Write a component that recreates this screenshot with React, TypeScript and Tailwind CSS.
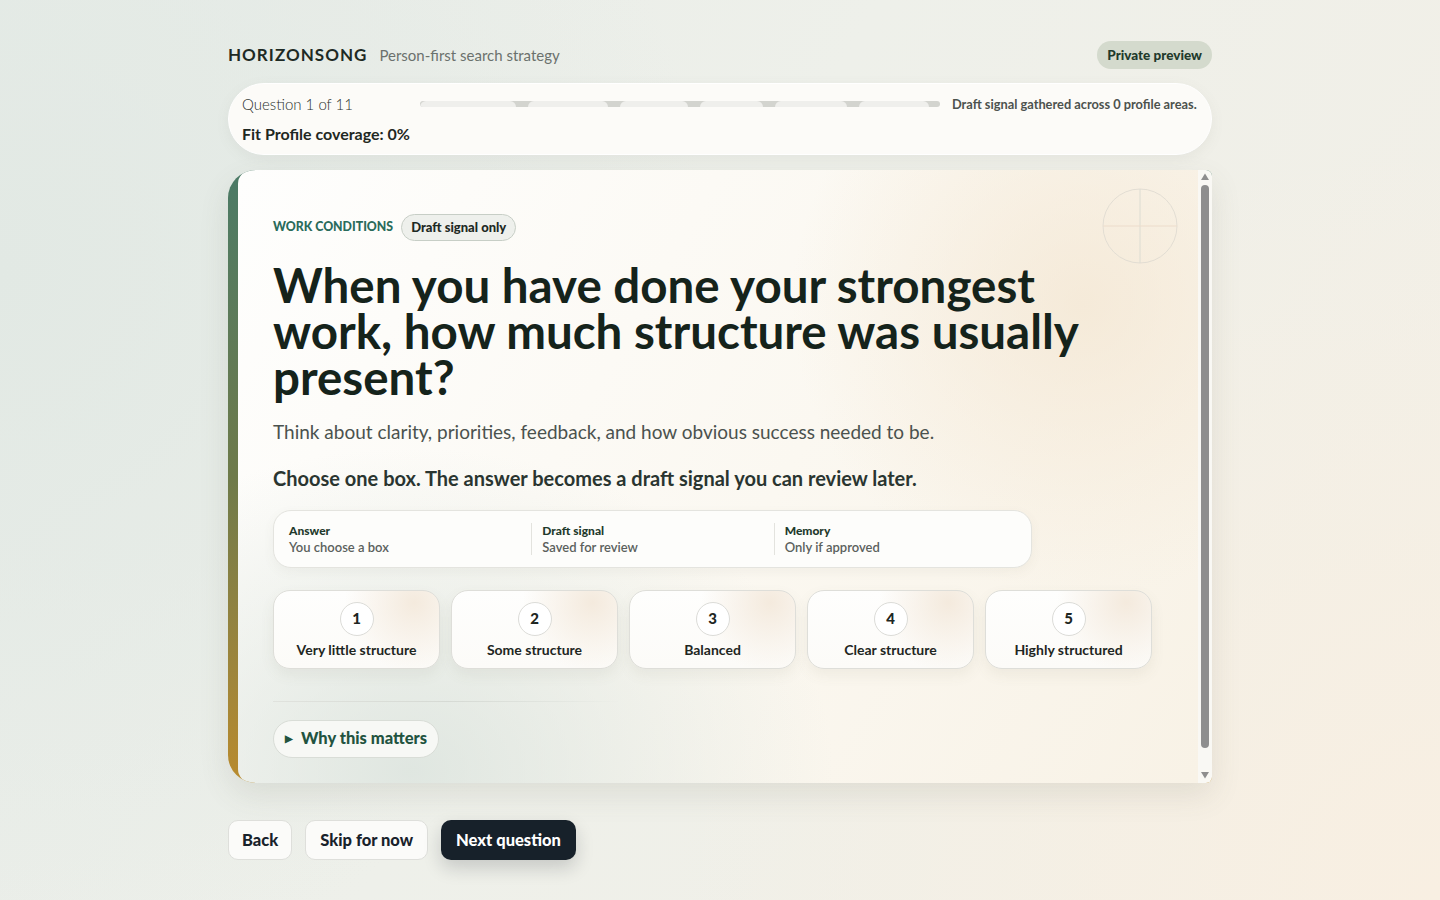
import React from 'react';

const segments = [96, 80, 68, 63, 72, 70];

const options = [
  { n: 1, label: 'Very little structure' },
  { n: 2, label: 'Some structure' },
  { n: 3, label: 'Balanced' },
  { n: 4, label: 'Clear structure' },
  { n: 5, label: 'Highly structured' },
];

const steps = [
  { title: 'Answer', text: 'You choose a box' },
  { title: 'Draft signal', text: 'Saved for review' },
  { title: 'Memory', text: 'Only if approved' },
];

const App: React.FC = () => {
  return (
    <div className="min-h-screen w-full font-['Lato',sans-serif] bg-[radial-gradient(circle_at_0%_30%,#e2e9e4,transparent_45%),radial-gradient(circle_at_100%_100%,#f8efe2,transparent_45%),linear-gradient(120deg,#e7ece8,#eef0ea_45%,#f3efe6)] pt-[41px] pb-10">
      <div className="mx-auto w-[984px]">
        {/* Top bar */}
        <header className="flex h-[28px] items-center justify-between">
          <div className="flex items-baseline gap-[12px]">
            <span className="text-[17px] font-bold tracking-[0.06em] text-[#1e2a24]">HORIZONSONG</span>
            <span className="text-[15px] text-[#6b716d]">Person-first search strategy</span>
          </div>
          <span className="rounded-full bg-[#d4dacd] px-[10px] py-[4px] text-[13.5px] font-black text-[#1f3a2c]">
            Private preview
          </span>
        </header>

        {/* Progress */}
        <section className="mt-[14px] flex h-[72px] items-start rounded-[36px] border border-white bg-[#fcfbf8] pl-[13px] pr-[10px] pt-[9px] shadow-[0_4px_14px_rgba(120,120,100,0.08)]">
          <div className="w-[178px] shrink-0">
            <p className="text-[15px] font-light leading-[22px] text-[#2a302c]">Question 1 of 11</p>
            <p className="mt-[8px] text-[16px] font-bold leading-[22px] text-[#1f2823]">Fit Profile coverage: 0%</p>
          </div>
          <div className="mt-[8px] flex h-[6px] w-[520px] shrink-0 gap-[12px] overflow-hidden rounded-full bg-[#d3d4cf]">
            {segments.map((w, i) => (
              <div key={i} className="h-full rounded-t-full bg-[#efefec]" style={{ width: w }} />
            ))}
          </div>
          <p className="ml-[12px] mt-[3px] whitespace-nowrap text-[12.8px] font-bold leading-[16px] text-[#4c524e]">
            Draft signal gathered across 0 profile areas.
          </p>
        </section>

        {/* Question card */}
        <section className="mt-[15px] flex h-[613px] overflow-hidden rounded-l-[28px] rounded-r-[6px] bg-gradient-to-b from-[#4a7a66] via-[#6e7a4a] to-[#b98b2d] shadow-[0_12px_30px_rgba(90,90,70,0.12)]">
          <div className="relative ml-[10px] flex-1 overflow-hidden rounded-l-[14px] bg-[radial-gradient(ellipse_at_18%_98%,rgba(214,224,218,0.75),transparent_38%),radial-gradient(circle_at_88%_22%,rgba(243,229,208,0.7),transparent_30%),linear-gradient(120deg,#fefefd,#fbf8f1_55%,#f8f2e6)]">
            <svg className="absolute right-[19px] top-[17px]" width="78" height="78" viewBox="0 0 78 78" fill="none">
              <circle cx="39" cy="39" r="37" stroke="#e2ddd3" strokeWidth="1" />
              <line x1="39" y1="2" x2="39" y2="76" stroke="#dcdcd2" strokeWidth="1" />
              <line x1="2" y1="39" x2="76" y2="39" stroke="#ecdccb" strokeWidth="1" />
            </svg>

            <div className="pl-[35px] pr-[45px] pt-[44px] pb-[48px]">
              <div className="flex items-center gap-[8px]">
                <span className="text-[12.3px] font-black uppercase text-[#2a6b5b]">Work conditions</span>
                <span className="rounded-full border border-[#c7cec6] bg-[#eef0ec] px-[9px] py-[5px] text-[13px] font-black leading-[15px] text-[#1e2a24]">
                  Draft signal only
                </span>
              </div>

              <h1 className="mt-[21px] max-w-[840px] text-[47.5px] font-bold leading-[46px] text-[#15231b]">
                When you have done your strongest work, how much structure was usually present?
              </h1>
              <p className="mt-[18px] text-[19px] text-[#4b524e]">
                Think about clarity, priorities, feedback, and how obvious success needed to be.
              </p>
              <p className="mt-[16px] text-[20px] font-bold text-[#2a3530]">
                Choose one box. The answer becomes a draft signal you can review later.
              </p>

              <div className="mt-[17px] grid w-[759px] grid-cols-3 rounded-[18px] border border-[#e4e4df] bg-[#fdfdfb] px-[15px] py-[12px] shadow-[0_4px_12px_rgba(100,100,80,0.06)]">
                {steps.map((s, i) => (
                  <div key={s.title} className={i === 0 ? '' : 'border-l border-[#e3e3de] pl-[10px]'}>
                    <p className="text-[12px] font-black leading-[16px] text-[#1f3a2c]">{s.title}</p>
                    <p className="text-[13px] font-semibold leading-[16px] text-[#5b615d]">{s.text}</p>
                  </div>
                ))}
              </div>

              <div className="mt-[22px] flex gap-[11px]">
                {options.map((o) => (
                  <button
                    key={o.n}
                    className="flex h-[79px] w-[167px] flex-col items-center rounded-[17px] border border-[#deded9] bg-[radial-gradient(circle_at_85%_15%,rgba(243,232,218,0.9),transparent_45%),linear-gradient(#fefefd,#fcfbf8)] pt-[11px] shadow-[0_6px_14px_rgba(100,100,80,0.08)]"
                  >
                    <span className="flex h-[34px] w-[34px] items-center justify-center rounded-full border border-[#dcdcd8] bg-white text-[15px] font-black text-[#1e2622]">
                      {o.n}
                    </span>
                    <span className="mt-[3px] text-[14px] font-bold text-[#1e2622]">{o.label}</span>
                  </button>
                ))}
              </div>

              <div className="mt-[32px] h-px w-[350px] bg-gradient-to-r from-[#e0e2dd] via-[#d6dad4] to-transparent" />

              <button className="mt-[18px] flex h-[38px] items-center gap-[8px] rounded-full border border-[#d9ddd7] bg-[#f7f8f5] pl-[11px] pr-[11px] text-[16.5px] font-black text-[#22533f]">
                <span className="text-[10px]">▶</span>
                Why this matters
              </button>
            </div>
          </div>

          {/* scroll track */}
          <div className="flex w-[14px] shrink-0 flex-col items-center bg-[#f9f8f4] pt-[3px] pb-[4px]">
            <svg width="8" height="7" viewBox="0 0 8 7">
              <path d="M4 0.5 L8 7 H0 Z" fill="#8e8e8e" />
            </svg>
            <div className="mt-[5px] h-[563px] w-[8px] rounded-full bg-[#8e8e8e]" />
            <div className="flex-1" />
            <svg width="8" height="7" viewBox="0 0 8 7">
              <path d="M0 0 H8 L4 6.5 Z" fill="#8e8e8e" />
            </svg>
          </div>
        </section>

        {/* Footer actions */}
        <div className="mt-[37px] flex gap-[13px]">
          <button className="h-[40px] rounded-[10px] border border-[#dedfdb] bg-[#fbfbf9] px-[13px] text-[16.5px] font-black text-[#18222b]">
            Back
          </button>
          <button className="h-[40px] rounded-[10px] border border-[#dedfdb] bg-[#fbfbf9] px-[14px] text-[16.5px] font-black text-[#18222b]">
            Skip for now
          </button>
          <button className="h-[40px] rounded-[10px] bg-[#17212a] px-[15px] text-[16.5px] font-black text-white shadow-[0_8px_18px_rgba(20,30,40,0.18)]">
            Next question
          </button>
        </div>
      </div>
    </div>
  );
};

export default App;
